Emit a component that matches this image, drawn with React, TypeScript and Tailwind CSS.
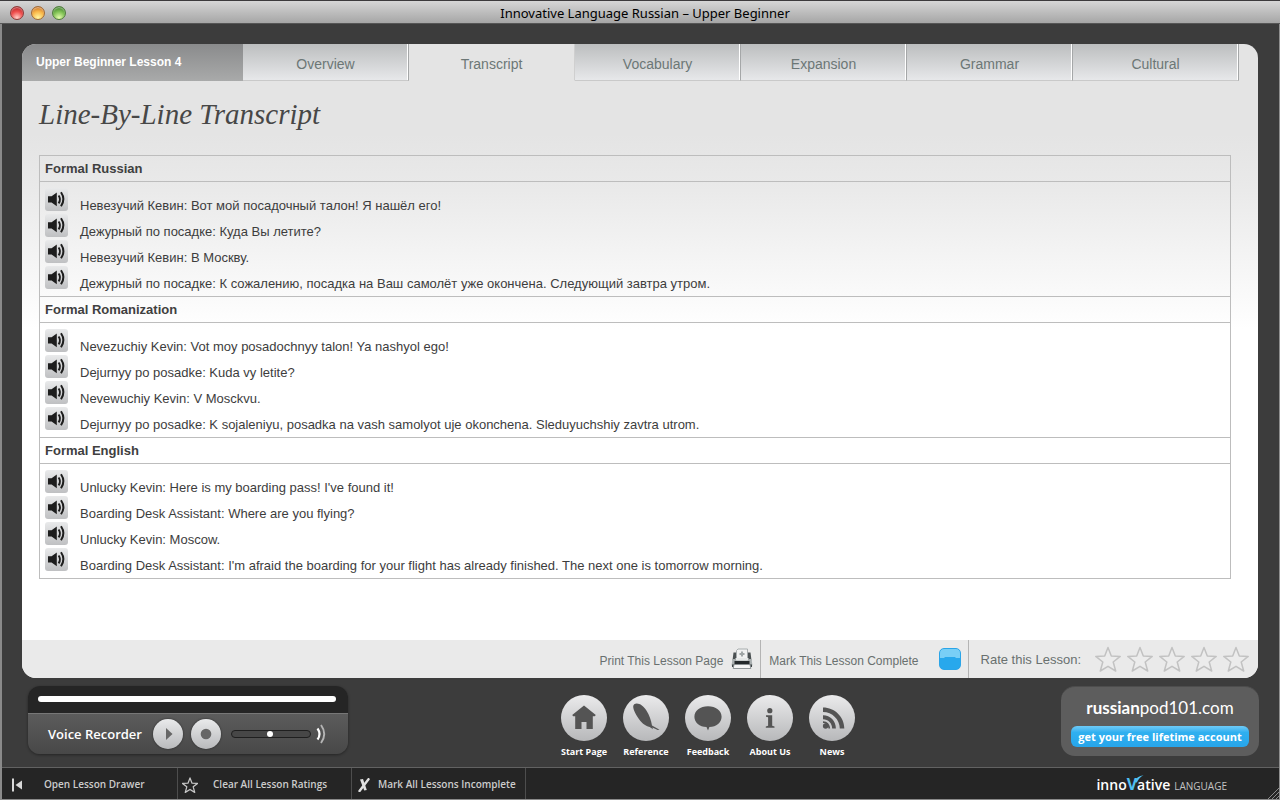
import React, { useState } from "react";

type Section = { title: string; lines: string[] };

const tabs = ["Overview", "Transcript", "Vocabulary", "Expansion", "Grammar", "Cultural"];

const sections: Section[] = [
  {
    title: "Formal Russian",
    lines: [
      "Невезучий Кевин: Вот мой посадочный талон! Я нашёл его!",
      "Дежурный по посадке: Куда Вы летите?",
      "Невезучий Кевин: В Москву.",
      "Дежурный по посадке: К сожалению, посадка на Ваш самолёт уже окончена. Следующий завтра утром.",
    ],
  },
  {
    title: "Formal Romanization",
    lines: [
      "Nevezuchiy Kevin: Vot moy posadochnyy talon! Ya nashyol ego!",
      "Dejurnyy po posadke: Kuda vy letite?",
      "Nevewuchiy Kevin: V Mosckvu.",
      "Dejurnyy po posadke: K sojaleniyu, posadka na vash samolyot uje okonchena. Sleduyuchshiy zavtra utrom.",
    ],
  },
  {
    title: "Formal English",
    lines: [
      "Unlucky Kevin: Here is my boarding pass! I've found it!",
      "Boarding Desk Assistant: Where are you flying?",
      "Unlucky Kevin: Moscow.",
      "Boarding Desk Assistant: I'm afraid the boarding for your flight has already finished. The next one is tomorrow morning.",
    ],
  },
];

function TitleBar() {
  return (
    <header className="flex h-6 items-center border-t border-b border-t-[#3c3a3c] border-b-[#565656] bg-gradient-to-b from-[#d6d6d6] to-[#a6a6a6] pl-2.5">
      <div className="flex flex-1 gap-[7px] pt-0.5">
        <button aria-label="Close" className="size-[14px] rounded-full border border-[#8d3a38] bg-[radial-gradient(circle_at_50%_90%,#ffc4bd_5%,#f04f4e_50%,#b8282a_85%)] shadow-[inset_0_1px_1px_#ffffff77]" />
        <button aria-label="Minimize" className="size-[14px] rounded-full border border-[#a06a35] bg-[radial-gradient(circle_at_50%_90%,#fff29a_5%,#f9b84a_50%,#cd772a_85%)] shadow-[inset_0_1px_1px_#ffffff77]" />
        <button aria-label="Zoom" className="size-[14px] rounded-full border border-[#4f7d3b] bg-[radial-gradient(circle_at_50%_90%,#dcf7a4_5%,#7fc054_50%,#45852f_85%)] shadow-[inset_0_1px_1px_#ffffff77]" />
      </div>
      <h1 className="pt-0.5 font-['Noto_Sans','Open_Sans',sans-serif] text-[13px] leading-5 text-black">
        Innovative Language Russian – Upper Beginner
      </h1>
      <div className="flex-1" />
    </header>
  );
}

function Tabs({ active, onSelect }: { active: string; onSelect: (t: string) => void }) {
  return (
    <div className="flex h-[37px] pr-[19px]">
      <div className="w-[221px] shrink-0 bg-gradient-to-b from-[#8a8b8c] to-[#a9aaaa] pl-[14px] text-xs leading-9 font-bold text-white">
        Upper Beginner Lesson 4
      </div>
      <nav role="tablist" className="flex flex-1">
        {tabs.map((t) => (
          <button
            key={t}
            role="tab"
            aria-selected={t === active}
            onClick={() => onSelect(t)}
            className={
              "flex-1 border-r border-b pt-1 text-sm text-[#6c7776] " +
              (t === active
                ? "border-r-[#cfcfcf] border-b-transparent"
                : "border-r-[#a5a7a8] border-b-[#c9c9c9] bg-gradient-to-b from-[#bcbebf] to-[#e7e8ea] shadow-[inset_-1px_0_0_#ffffff]")
            }
          >
            {t}
          </button>
        ))}
      </nav>
    </div>
  );
}

function SpeakerIcon() {
  return (
    <svg viewBox="0 0 23 23" className="size-[23px]" aria-hidden="true">
      <path d="M3 8.200h3.600L11.800 4.500v13.800l-5.200-3.700H3z" fill="#1d1d1d" />
      <path d="M13.600 7.500q2.800 3.900 0 7.900" fill="none" stroke="#1d1d1d" strokeWidth="1.900" />
      <path d="M16 4.300q4.800 7 0 14" fill="none" stroke="#1d1d1d" strokeWidth="2" />
    </svg>
  );
}

function Transcript() {
  return (
    <table className="w-full border-separate border-spacing-0 border-x border-b border-[#bdbdbd] text-[13px] text-[#3d3d3d]">
      {sections.map((s) => (
        <tbody key={s.title}>
          <tr>
            <th colSpan={2} scope="colgroup" className="h-[27px] border-y border-[#bdbdbd] pl-[5px] text-left leading-5 font-bold text-[#404040]">
              {s.title}
            </th>
          </tr>
          {s.lines.map((line, i) => {
            const first = i === 0;
            const last = i === s.lines.length - 1;
            return (
              <tr key={line}>
                <td className={"w-10 pl-[5px] align-top " + (first ? "pt-1.5" : last ? "pb-1" : "")}>
                  <div className="h-[26px]">
                    <button aria-label={"Play: " + line} className="block rounded-[3px] bg-gradient-to-b from-[#e9eaeb] to-[#bfc0c2]">
                      <SpeakerIcon />
                    </button>
                  </div>
                </td>
                <td className={"align-bottom leading-4 " + (last ? "pb-1" : "")}>{line}</td>
              </tr>
            );
          })}
        </tbody>
      ))}
    </table>
  );
}

function PrinterIcon() {
  return (
    <svg viewBox="0 0 22 22" className="size-[22px]" aria-hidden="true">
      <path d="M2.500 4.500h3v8h-4zM19.500 4.500h-3v8h4z" fill="#4b5153" />
      <path d="M5.500 11V2.500L7 1h9.500v10z" fill="#f1f2f2" stroke="#a2a7a8" strokeWidth=".9" />
      <path d="M11 3.500v5M8.500 6h5" stroke="#a0a6a7" strokeWidth="2" />
      <path d="M4.500 10h13v2.500h-13z" fill="#e5e8e8" />
      <path d="M1.500 11h3v1.500h13V11h3l1 6.500h-21z" fill="#a9afb0" />
      <path d="M3.500 13h15v3.500h-15z" fill="#24292b" />
      <path d="M1 16.500h20v2.500H1z" fill="#3d4345" />
      <path d="M3 16.500h16l.800 4H2.200z" fill="#f5f5f5" stroke="#858b8d" strokeWidth=".9" />
    </svg>
  );
}

const starPath = "M13 1.500l3.300 8.500 8.900.4-7 5.600 2.500 9L13 20.300 5.300 25l2.500-9-7-5.600 8.900-.4z";

function PanelFooter() {
  const [rating, setRating] = useState(0);
  return (
    <footer className="flex h-[38px] items-stretch justify-end bg-[#eaeaea] pr-[9px] text-xs text-[#69706f]">
      <button className="flex items-center gap-2 pr-[7px]">
        <span className="pt-1">Print This Lesson Page</span>
        <PrinterIcon />
      </button>
      <label className="flex items-center gap-5 border-x border-[#b4b4b4] px-[7px]">
        <span className="pt-1 pl-px">Mark This Lesson Complete</span>
        <input
          type="checkbox"
          className="size-[22px] appearance-none rounded-[5px] border border-[#2ba5e8] bg-[radial-gradient(ellipse_110%_60%_at_50%_100%,#28a8ec_98%,#79cff6_100%)]"
        />
      </label>
      <div className="flex items-center pl-3">
        <span className="pt-0.5 pr-3 text-[13px]">Rate this Lesson:</span>
        <div className="flex gap-1.5 pl-0.5">
          {[1, 2, 3, 4, 5].map((n) => (
            <button key={n} aria-label={"Rate " + n} onClick={() => setRating(n)}>
              <svg viewBox="0 0 26 26" className="size-[26px]" aria-hidden="true">
                <path d={starPath} fill={n <= rating ? "#c4c4c4" : "#ececec"} stroke="#c2c2c2" strokeWidth="1.500" strokeLinejoin="round" />
              </svg>
            </button>
          ))}
        </div>
      </div>
    </footer>
  );
}

function Recorder() {
  return (
    <section className="w-80 overflow-hidden rounded-xl shadow-[0_1px_3px_#00000066]">
      <div className="h-[27px] bg-[#252525] pt-2.5 pr-3 pl-2.5">
        <div className="h-1.5 rounded-full bg-white" />
      </div>
      <div className="flex h-[41px] items-center border-t border-[#777777] bg-gradient-to-b from-[#5c5c5c] to-[#484848] pl-5">
        <h2 className="w-[105px] pt-0.5 font-['Open_Sans','Noto_Sans',sans-serif] text-[13px] font-semibold whitespace-nowrap text-white">
          Voice Recorder
        </h2>
        <div className="flex gap-2">
          <button aria-label="Play" className="size-[30px] rounded-full bg-gradient-to-b from-[#e9eaeb] to-[#b9babc] shadow-[0_0_2px_#222222]">
            <svg viewBox="0 0 30 30" className="size-[30px]" aria-hidden="true">
              <path d="M13 9l6.500 6-6.500 6z" fill="#666666" />
            </svg>
          </button>
          <button aria-label="Record" className="size-[30px] rounded-full bg-gradient-to-b from-[#e9eaeb] to-[#b9babc] shadow-[0_0_2px_#222222]">
            <svg viewBox="0 0 30 30" className="size-[30px]" aria-hidden="true">
              <circle cx="15" cy="15" r="5.300" fill="#666666" />
            </svg>
          </button>
        </div>
        <input
          type="range"
          aria-label="Volume"
          min={0}
          max={100}
          defaultValue={49}
          className="ml-2.5 h-2 w-20 appearance-none rounded-full border border-[#1f1f1f] bg-[#474747] [&::-webkit-slider-thumb]:size-1.5 [&::-webkit-slider-thumb]:appearance-none [&::-webkit-slider-thumb]:rounded-full [&::-webkit-slider-thumb]:bg-white"
        />
        <svg viewBox="0 0 12 20" className="ml-1 h-5 w-3" aria-hidden="true">
          <path d="M2.500 4.500q4 5.500 0 11" fill="none" stroke="#ffffff" strokeWidth="2.200" />
          <path d="M6 1q6.500 9 0 18" fill="none" stroke="#b4b4b4" strokeWidth="1.900" />
        </svg>
      </div>
    </section>
  );
}

const links: { label: string; icon: React.ReactNode }[] = [
  {
    label: "Start Page",
    icon: <path d="M23 10.500L11.200 20l1 1.200h2V34h6.300v-7h5v7h6.300V21.200h2l1-1.200z" />,
  },
  {
    label: "Reference",
    icon: (
      <path d="M11.200 9.200c3.600-2.200 9 1 12.200 6.300 3 4.800 4.700 9.500 5.600 15l7.500 4.200-1.800.4-5.300-2.500.6 1.700-3.300-2.400c-4.600-.8-9-4.400-12-9.600-3.400-5.600-6-11-3.500-13.100z" />
    ),
  },
  {
    label: "Feedback",
    icon: <path d="M23 11.200c7.800 0 13.600 4.600 13.600 10.500 0 5.700-5.200 10-12.200 10.400L23 35.500l-1.500-3.400c-7-.4-12.100-4.700-12.100-10.400 0-5.900 5.800-10.500 13.600-10.500z" />,
  },
  {
    label: "About Us",
    icon: (
      <>
        <circle cx="22.800" cy="15.700" r="2.600" />
        <path d="M19 20.200h6.200v10.500l2.300.7v1.400h-8.700v-1.400l2.300-.7v-8.400l-2.100-.6z" />
      </>
    ),
  },
  {
    label: "News",
    icon: (
      <>
        <circle cx="16.600" cy="31" r="2.700" />
        <path d="M14 20.300c7.300 0 12.900 5.800 12.900 13.200h-3.700c0-5.200-4-9.300-9.200-9.300z" />
        <path d="M14 12.500c11.800 0 21.300 9.400 21.300 21h-4.500C30.800 24.500 23.200 17 14 17z" />
        <path d="M14 26.300c4.200 0 7.100 3.200 7.100 7.200h-1.700c0-3-2.300-5.400-5.400-5.400z" />
      </>
    ),
  },
];

function QuickLinks() {
  return (
    <nav className="flex pt-[9px] pl-[7px]">
      {links.map((l) => (
        <a key={l.label} href="#" className="flex w-[62px] flex-col items-center">
          <span className="rounded-full bg-gradient-to-b from-[#ebebec] to-[#b7b8ba]">
            <svg viewBox="0 0 46 46" className="size-[46px]" fill="#545454" aria-hidden="true">
              {l.icon}
            </svg>
          </span>
          <span className="pt-1 font-['Open_Sans','Noto_Sans',sans-serif] text-[9px] leading-[14px] font-bold text-white">{l.label}</span>
        </a>
      ))}
    </nav>
  );
}

function Promo() {
  return (
    <section className="flex h-[70px] w-[198px] flex-col items-center rounded-[14px] border-t border-[#4d4d4d] bg-[#5d5d5d] px-2.5 pt-[9px]">
      <p className="font-['Lato',sans-serif] text-[17px] leading-6 text-white">
        <span className="font-bold">russian</span>pod101.com
      </p>
      <a
        href="#"
        className="mt-1.5 h-[21px] w-full rounded-md bg-gradient-to-b from-[#6ecbf7] via-[#2fb0f0] via-30% to-[#27a5ea] text-center font-['Open_Sans','Noto_Sans',sans-serif] text-[11px] leading-[21px] font-bold whitespace-nowrap text-white"
      >
        get your free lifetime account
      </a>
    </section>
  );
}

function BottomBar() {
  const item = "flex w-[174px] items-center border-r border-[#4d4d4d] pt-0.5 whitespace-nowrap";
  return (
    <footer className="flex h-8 border-t border-[#626262] bg-[#252525] pl-0.5 font-['Open_Sans','Noto_Sans',sans-serif] text-[10px] font-semibold text-[#cccccc]">
      <button className={item + " pl-[7px]"}>
        <svg viewBox="0 0 12 14" className="mr-[21px] h-[14px] w-3" fill="#d8d8d8" aria-hidden="true">
          <rect x="1" y=".5" width="2" height="13" />
          <path d="M11 2.500v9L4.500 7z" />
        </svg>
        Open Lesson Drawer
      </button>
      <button className={item + " pl-1"}>
        <svg viewBox="0 0 26 26" className="mr-[15px] size-4" aria-hidden="true">
          <path d={starPath} fill="none" stroke="#c8c8c8" strokeWidth="2" strokeLinejoin="round" />
        </svg>
        Clear All Lesson Ratings
      </button>
      <button className={item + " pl-[5px]"}>
        <svg viewBox="0 0 14 14" className="mr-[7px] size-[14px]" aria-hidden="true">
          <path d="M3 1.500l3-.5 3.800 11-2.600.5z" fill="#e0e0e0" />
          <path d="M11.500 1.200L2.500 13" stroke="#e0e0e0" strokeWidth="2.400" strokeLinecap="round" />
        </svg>
        Mark All Lessons Incomplete
      </button>
      <div className="flex flex-1 items-end justify-end">
        <p className="flex items-baseline pr-10 pb-[3px] font-['Open_Sans','Noto_Sans',sans-serif] text-sm leading-5 font-semibold text-white">
          inno
          <span className="relative text-base leading-5 font-bold text-[#4fc0f2]">
            V
            <svg viewBox="0 0 10 8" className="absolute top-px left-[7px] h-2 w-2.5" aria-hidden="true">
              <path d="M0 7Q3 1 9.500.3Q5 2.500 2.800 7.500z" fill="#4fc0f2" />
            </svg>
          </span>
          ative
          <span className="pl-1 text-[10px] font-normal text-[#c2c2c2]">LANGUAGE</span>
        </p>
        <svg viewBox="0 0 12 12" className="size-3" aria-hidden="true">
          <path d="M1 12L12 1M5 12l7-7M9 12l3-3" stroke="#8b8b8b" />
        </svg>
      </div>
    </footer>
  );
}

export default function App() {
  const [active, setActive] = useState("Transcript");
  return (
    <div className="flex min-h-screen flex-col border-b border-[#8a8a8a] bg-[#3c3c3c] font-['Liberation_Sans',Arial,sans-serif]">
      <TitleBar />
      <div className="flex flex-1 flex-col border-r border-l-2 border-r-[#8f8f8f] border-l-[#8a8a8a]">
        <div className="flex flex-1 flex-col px-5 pt-5 pr-[21px]">
          <main className="flex flex-1 flex-col overflow-hidden rounded-[14px] bg-white bg-[linear-gradient(180deg,#e4e4e4_90px,#e9e9e9_140px,#ffffff_285px)]">
            <Tabs active={active} onSelect={setActive} />
            <div className="flex-1 pr-[27px] pb-6 pl-[17px]">
              <h2 className="pt-[15px] pb-[23px] font-['Liberation_Serif',serif] text-[29px] leading-9 text-[#474747] italic">
                Line-By-Line Transcript
              </h2>
              <Transcript />
            </div>
            <PanelFooter />
          </main>
        </div>
        <div className="flex h-[89px] items-start justify-between pt-2 pr-5 pl-[26px]">
          <Recorder />
          <QuickLinks />
          <Promo />
        </div>
        <BottomBar />
      </div>
    </div>
  );
}
